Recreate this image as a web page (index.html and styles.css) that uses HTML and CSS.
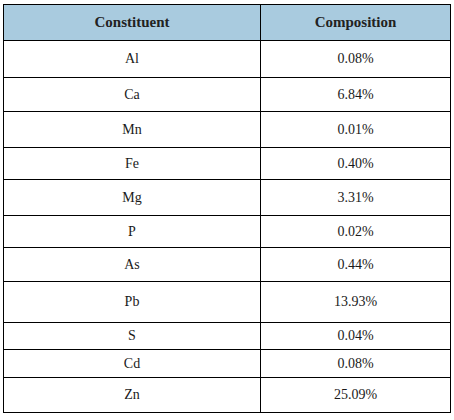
FILE: index.html
```html
<!DOCTYPE html>
<html>
<head>
<meta charset="utf-8">
<link rel="stylesheet" href="styles.css">
</head>
<body>
<table class="comp">
  <colgroup><col class="c1"><col class="c2"></colgroup>
  <thead>
    <tr><th>Constituent</th><th>Composition</th></tr>
  </thead>
  <tbody>
    <tr class="r-al"><td>Al</td><td>0.08%</td></tr>
    <tr class="r-ca"><td>Ca</td><td>6.84%</td></tr>
    <tr class="r-mn"><td>Mn</td><td>0.01%</td></tr>
    <tr class="r-fe"><td>Fe</td><td>0.40%</td></tr>
    <tr class="r-mg"><td>Mg</td><td>3.31%</td></tr>
    <tr class="r-p"><td>P</td><td>0.02%</td></tr>
    <tr class="r-as"><td>As</td><td>0.44%</td></tr>
    <tr class="r-pb"><td>Pb</td><td>13.93%</td></tr>
    <tr class="r-s"><td>S</td><td>0.04%</td></tr>
    <tr class="r-cd"><td>Cd</td><td>0.08%</td></tr>
    <tr class="r-zn"><td>Zn</td><td>25.09%</td></tr>
  </tbody>
</table>
</body>
</html>
```
FILE: styles.css
```css
html, body { background: #fff; }
body { margin: 0; padding: 4px 0 0 3px; }
.comp {
  border-collapse: collapse;
  table-layout: fixed;
  width: 447px;
  font-family: "Liberation Serif", "Times New Roman", serif;
  font-size: 14px;
  color: #1a1a1a;
}
.c1 { width: 257px; }
.c2 { width: 190px; }
.comp th, .comp td {
  border: 1.5px solid #000;
  text-align: center;
  vertical-align: middle;
  padding: 0;
  box-sizing: border-box;
}
.comp th {
  background: #a9cbdf;
  font-weight: bold;
  font-size: 15px;
  color: #222;
  height: 36px;
}
.r-al td { height: 37px; }
.r-ca td { height: 34px; }
.r-mn td { height: 36px; }
.r-fe td { height: 32px; }
.r-mg td { height: 36px; }
.r-p td { height: 32px; }
.r-as td { height: 34px; }
.r-pb td { height: 41px; }
.r-s td { height: 27px; }
.r-cd td { height: 28px; }
.r-zn td { height: 35px; }
```
